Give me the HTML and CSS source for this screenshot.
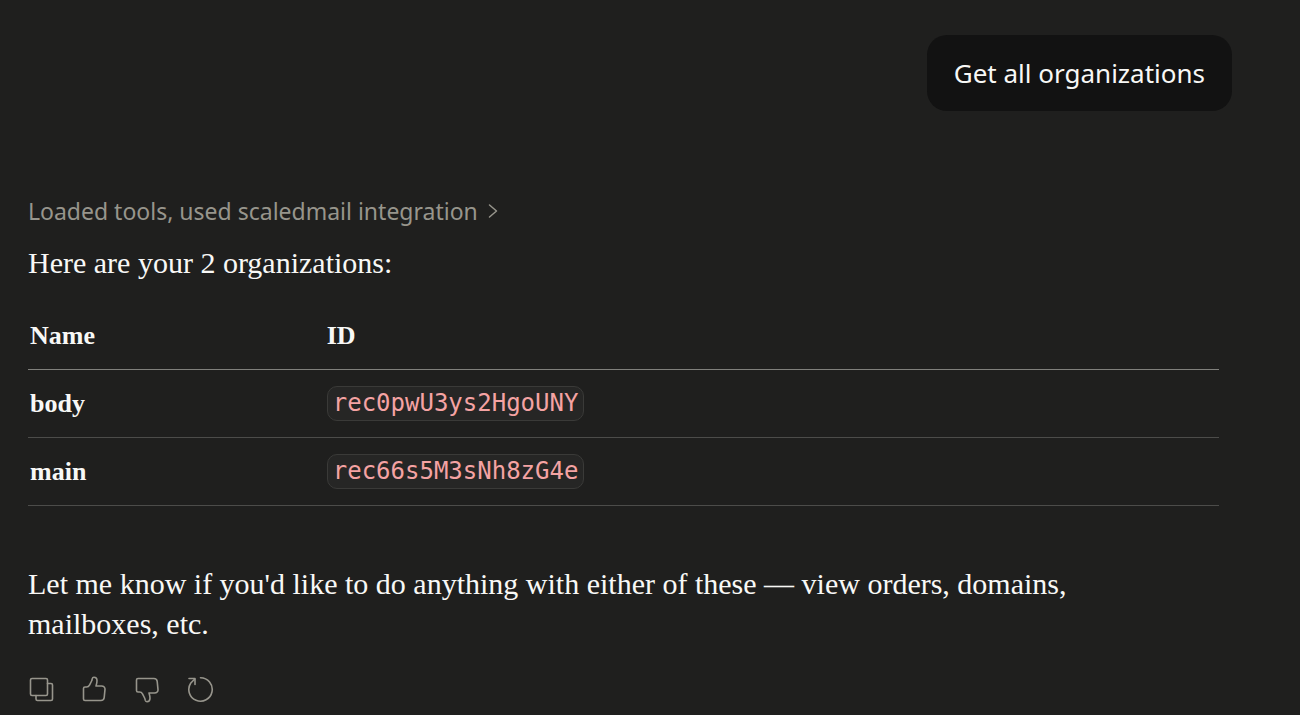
FILE: index.html
```html
<!DOCTYPE html>
<html lang="en">

<head>
    <meta charset="UTF-8">
    <meta name="viewport" content="width=device-width, initial-scale=1.0">
    <title>Get all organizations</title>
    <link rel="stylesheet" href="styles.css">
</head>

<body>
    <main class="chat">
        <div class="user-message">Get all organizations</div>

        <section class="reply">
            <button type="button" class="tool-summary">
                Loaded tools, used scaledmail integration
                <svg class="chevron" viewBox="0 0 10 16" aria-hidden="true">
                    <path d="M1.5 2 8.5 8l-7 6" />
                </svg>
            </button>

            <p>Here are your 2 organizations:</p>

            <table class="org-table">
                <thead>
                    <tr>
                        <th scope="col" class="name-col">Name</th>
                        <th scope="col">ID</th>
                    </tr>
                </thead>
                <tbody>
                    <tr>
                        <th scope="row">body</th>
                        <td><code>rec0pwU3ys2HgoUNY</code></td>
                    </tr>
                    <tr>
                        <th scope="row">main</th>
                        <td><code>rec66s5M3sNh8zG4e</code></td>
                    </tr>
                </tbody>
            </table>

            <p class="closing">Let me know if you'd like to do anything with either of these — view orders, domains, mailboxes, etc.</p>

            <div class="actions">
                <button type="button" aria-label="Copy">
                    <svg viewBox="0 0 27 27">
                        <rect x="2.5" y="2.5" width="17" height="17" rx="1.5" />
                        <path d="M19.5 7.5H23A1.5 1.5 0 0 1 24.5 9v14a1.5 1.5 0 0 1-1.5 1.5H9.5A1.5 1.5 0 0 1 8 23v-3.5" />
                    </svg>
                </button>
                <button type="button" aria-label="Good response">
                    <svg viewBox="0 0 27 27">
                        <path d="M2.5 12.5A1.5 1.5 0 0 1 4 11h1.5c1.3 0 2.4-.7 3-1.9L10.600 5c.4-.8.5-1.500.6-2.200.2-.9.8-1.500 1.700-1.500 1.900 0 3.100 1.500 3.100 3.400 0 1.900-.5 3.700-1 5.300h5.500c2.300 0 3.700 1.500 3.500 3.400l-.8 8.100c-.2 1.700-1.500 3-3.300 3H4A1.5 1.5 0 0 1 2.5 23z" />
                    </svg>
                </button>
                <button type="button" aria-label="Bad response">
                    <svg viewBox="0 0 27 27">
                        <path d="M2.5 14.5A1.5 1.5 0 0 0 4 16h1.5c1.3 0 2.4.7 3 1.9l2.100 4.100c.4.8.5 1.500.6 2.200.2.9.8 1.500 1.700 1.500 1.900 0 3.100-1.500 3.100-3.400 0-1.900-.5-3.700-1-5.300h5.500c2.300 0 3.700-1.500 3.500-3.400l-.8-8.100c-.2-1.700-1.500-3-3.300-3H4A1.5 1.5 0 0 0 2.5 4z" />
                    </svg>
                </button>
                <button type="button" aria-label="Retry">
                    <svg viewBox="0 0 27 27">
                        <path d="M13.5 1.8A11.7 11.7 0 1 1 3.8 7l3.7-3.8" />
                        <path d="M2 2.5h6v6" />
                    </svg>
                </button>
            </div>
        </section>
    </main>
</body>

</html>
```
FILE: styles.css
```css
body {
    margin: 0;
    background-color: #1f1f1e;
    color: #f8f8f6;
    font-family: "Liberation Serif", serif;
    font-size: 30px;
    line-height: 40px;
}

.chat {
    display: flex;
    flex-direction: column;
    padding: 35px 68px 8px 28px;
}

.user-message {
    align-self: flex-end;
    padding: 18px 27px;
    border-radius: 20px;
    background-color: #121212;
    font-family: "Noto Sans", sans-serif;
    font-size: 26px;
}

.reply {
    margin: 80px 13px 0 0;
}

button {
    padding: 0;
    border: none;
    background: none;
    color: #97958c;
    cursor: pointer;
}

svg {
    display: block;
    fill: none;
    stroke: currentColor;
    stroke-width: 1.6;
    stroke-linecap: round;
    stroke-linejoin: round;
}

.tool-summary {
    display: flex;
    align-items: center;
    gap: 10px;
    font-family: "Noto Sans", sans-serif;
    font-size: 23px;
    line-height: 40px;
}

.chevron {
    width: 10px;
    height: 16px;
    stroke-width: 1.5;
}

p {
    margin: 12px 0 0;
}

.org-table {
    width: 100%;
    margin-top: 20px;
    border-collapse: collapse;
    font-size: 26px;
    line-height: 34px;
}

.org-table th,
.org-table td {
    padding: 16px 1px;
    border-bottom: 1px solid #4c4c4a;
    text-align: left;
}

.org-table thead th {
    border-bottom-color: #80807c;
}

.org-table th:first-child {
    padding-left: 2px;
}

.name-col {
    width: 25%;
}

code {
    display: block;
    width: fit-content;
    padding: 0 5px;
    border: 1px solid #3a3a38;
    border-radius: 10px;
    background-color: #262625;
    color: #f5a3a3;
    font-family: "DejaVu Sans Mono", monospace;
    font-size: 24px;
    line-height: 33px;
}

.closing {
    max-width: 1080px;
    margin-top: 58px;
}

.actions {
    display: flex;
    gap: 26px;
    margin-top: 32px;
}

.actions svg {
    width: 27px;
    height: 27px;
}
```
